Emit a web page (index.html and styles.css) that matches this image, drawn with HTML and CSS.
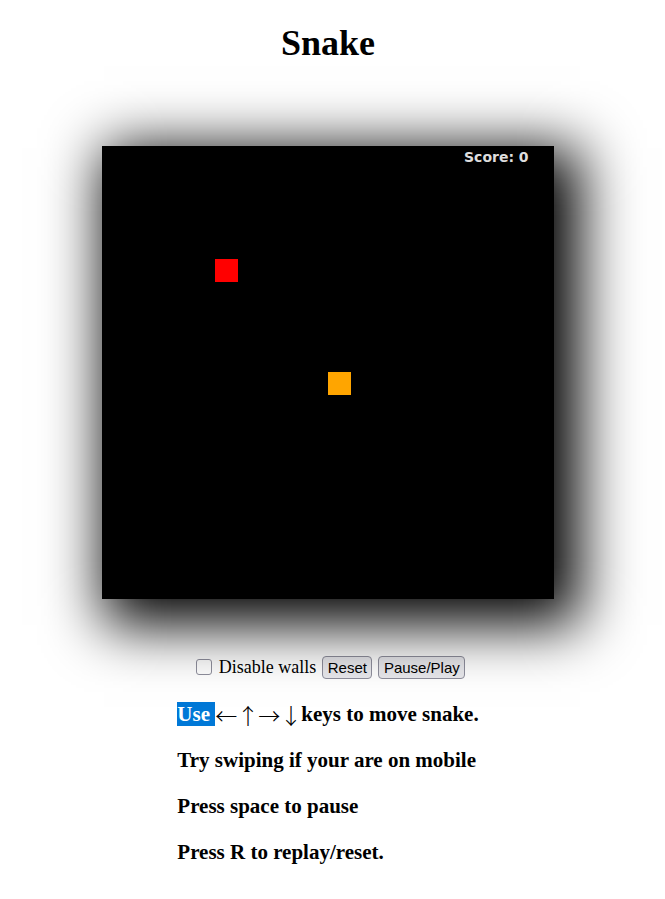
FILE: index.html
```html
<!DOCTYPE html>
<html lang="en">
<head>
<meta charset="utf-8">
<title>Snake</title>
<link rel="stylesheet" href="styles.css">
</head>
<body>
<main class="page">
  <h1 class="title">Snake</h1>
  <div class="board">
    <div class="score">Score: 0</div>
    <div class="cell food" style="left:113px;top:113px"></div>
    <div class="cell snake" style="left:226px;top:226px"></div>
  </div>
  <div class="controls">
    <label class="walls"><input type="checkbox" class="check"> Disable walls</label>
    <button class="btn">Reset</button>
    <button class="btn">Pause/Play</button>
  </div>
  <div class="help">
    <h3 class="line"><span class="sel">Use </span><span class="arr wide">←</span> <span class="arr narrow">↑</span> <span class="arr wide">→</span> <span class="arr narrow">↓</span> keys to move snake.</h3>
    <h3 class="line">Try swiping if your are on mobile</h3>
    <h3 class="line">Press space to pause</h3>
    <h3 class="line">Press R to replay/reset.</h3>
  </div>
</main>
</body>
</html>
```
FILE: styles.css
```css
html, body {
  margin: 0;
  padding: 0;
  background: #fff;
}
body {
  font-family: "Liberation Serif", "Times New Roman", serif;
  font-size: 18px;
  color: #000;
}
.page {
  width: 640px;
  margin-left: 8px;
}
.title {
  font-size: 36px;
  font-weight: bold;
  text-align: center;
  margin: 23px 0 0;
  line-height: 41px;
}
.board {
  position: relative;
  width: 452px;
  height: 453px;
  margin: 82px auto 0;
  background: #000;
  box-shadow: 14px 14px 55px 12px #000;
}
.score {
  position: absolute;
  left: 362px;
  top: 3px;
  font-family: "DejaVu Sans", Verdana, sans-serif;
  font-size: 14px;
  font-weight: bold;
  color: #ddd;
}
.cell {
  position: absolute;
  width: 22.6px;
  height: 22.6px;
}
.food { background: #f00; }
.snake { background: #ffa500; }
.controls {
  display: flex;
  justify-content: center;
  align-items: center;
  height: 24px;
  margin-top: 56px;
  padding-left: 4px;
}
.walls {
  display: flex;
  align-items: center;
  font-size: 18px;
  margin-right: 3px;
}
.check {
  appearance: none;
  -webkit-appearance: none;
  width: 16px;
  height: 16px;
  margin: 0 7px 0 4px;
  border: 1.5px solid #8f8f9d;
  border-radius: 3px;
  background: #fff;
  box-sizing: border-box;
}
.btn {
  font-family: "Liberation Sans", Arial, sans-serif;
  font-size: 15px;
  color: #000;
  background: #e9e9ed;
  border: 1px solid #8f8f9d;
  border-radius: 4px;
  padding: 1px 4.5px;
  height: 23px;
  margin: 0 3px;
  line-height: 19px;
}
.help {
  width: fit-content;
  margin: 24px auto 0;
}
.line {
  font-size: 21px;
  font-weight: bold;
  margin: 0 0 23px;
  line-height: 23px;
  white-space: nowrap;
}
.sel {
  background: #0078d7;
  color: #fff;
}
.arr {
  font-family: "Noto Sans CJK JP", sans-serif;
  font-weight: 300;
  font-size: 22px;
  line-height: 23px;
  vertical-align: top;
}
.wide {
  margin-right: 0.5px;
}
.narrow {
  letter-spacing: -12px;
  margin-left: -6px;
  margin-right: 6px;
}
```
